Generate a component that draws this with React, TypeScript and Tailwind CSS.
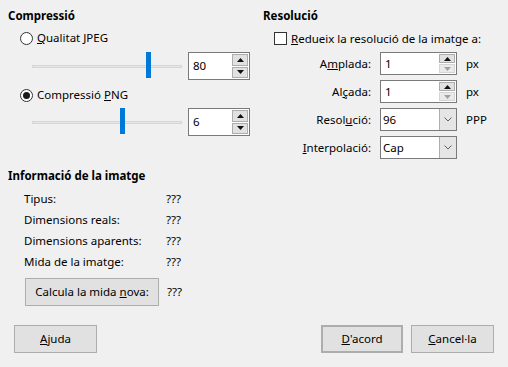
import React from "react";

const font = "font-['Noto_Sans',sans-serif] text-[11.5px] text-black";

function Radio({ checked }: { checked?: boolean }) {
  return (
    <span className="flex h-[13px] w-[13px] items-center justify-center rounded-full border border-[#333] bg-white">
      {checked && <span className="h-[7px] w-[7px] rounded-full bg-[#1a1a1a]" />}
    </span>
  );
}

function Arrow({ up, disabled }: { up?: boolean; disabled?: boolean }) {
  return (
    <svg width="7" height="4" viewBox="0 0 7 4">
      <polygon
        points={up ? "0,4 7,4 3.5,0" : "0,0 7,0 3.5,4"}
        fill={disabled ? "#a0a0a0" : "#111"}
      />
    </svg>
  );
}

function Spin({ value, className, downDisabled }: { value: string; className: string; downDisabled?: boolean }) {
  return (
    <div className={`flex items-center border border-[#7a7a7a] bg-white pl-[4px] pr-[1px] ${className}`}>
      <span className="flex-1">{value}</span>
      <div className="flex h-full flex-col justify-center gap-[1px] py-[1px]">
        <span className="flex flex-1 w-[16px] items-center justify-center border border-[#adadad] bg-[#e1e1e1]">
          <Arrow up />
        </span>
        <span
          className={`flex flex-1 w-[16px] items-center justify-center border ${
            downDisabled ? "border-[#d4d4d4] bg-[#eaeaea]" : "border-[#adadad] bg-[#e1e1e1]"
          }`}
        >
          <Arrow disabled={downDisabled} />
        </span>
      </div>
    </div>
  );
}

function Combo({ value }: { value: string }) {
  return (
    <div className="flex h-[23px] w-[77px] items-stretch border border-[#7a7a7a] bg-white">
      <span className="flex flex-1 items-center pl-[2px]">{value}</span>
      <span className="flex w-[17px] items-center justify-center border-l border-[#adadad] bg-[#e5e5e5]">
        <svg width="8" height="5" viewBox="0 0 8 5">
          <polyline points="0.5,0.5 4,4 7.5,0.5" fill="none" stroke="#606060" strokeWidth="1" />
        </svg>
      </span>
    </div>
  );
}

function Slider({ pos }: { pos: number }) {
  return (
    <div className="relative ml-[24px] h-[28px] w-[150px]">
      <div className="absolute left-0 right-0 top-[13px] h-[3px] border border-[#d6d6d6] bg-[#e7e7e7]" />
      <div className="absolute top-0 h-[26px] w-[5px] bg-[#0078d7]" style={{ left: pos }} />
    </div>
  );
}

function Btn({ children, className = "" }: { children: React.ReactNode; className?: string }) {
  return (
    <div className={`flex h-[28px] items-center justify-center border border-[#adadad] bg-[#e1e1e1] ${className}`}>
      {children}
    </div>
  );
}

export default function App() {
  return (
    <div className={`flex h-[367px] w-[508px] flex-col bg-[#f0f0f0] ${font}`}>
      <div className="flex">
        {/* left column */}
        <div className="flex w-[263px] flex-col pl-[8px]">
          <div className="mt-[6px] h-[20px] leading-[20px] font-bold">Compressió</div>
          <div className="flex h-[24px] items-center gap-[4px] pl-[12px]">
            <Radio />
            <span>
              <u>Q</u>ualitat JPEG
            </span>
          </div>
          <div className="mt-[2px] flex h-[28px] items-start">
            <Slider pos={114} />
            <Spin value="80" className="ml-[6px] h-[28px] w-[62px]" />
          </div>
          <div className="mt-[3px] flex h-[24px] items-center gap-[4px] pl-[12px]">
            <Radio checked />
            <span>
              Compressió <u>P</u>NG
            </span>
          </div>
          <div className="mt-[1px] flex h-[28px] items-start">
            <Slider pos={88} />
            <Spin value="6" className="ml-[6px] h-[28px] w-[62px]" />
          </div>

          <div className="mt-[30px] h-[20px] leading-[20px] font-bold">Informació de la imatge</div>
          <div className="mt-[2px] grid grid-cols-[142px_1fr] pl-[16px] leading-[21px]">
            <span>Tipus:</span>
            <span>???</span>
            <span>Dimensions reals:</span>
            <span>???</span>
            <span>Dimensions aparents:</span>
            <span>???</span>
            <span>Mida de la imatge:</span>
            <span>???</span>
          </div>
          <div className="mt-[6px] flex items-center pl-[17px]">
            <Btn className="w-[134px]">
              <span>
                Calcula la mida <u>n</u>ova:
              </span>
            </Btn>
            <span className="ml-[8px]">???</span>
          </div>
        </div>

        {/* right column */}
        <div className="flex flex-1 flex-col">
          <div className="mt-[6px] h-[20px] leading-[20px] font-bold">Resolució</div>
          <div className="flex h-[25px] items-center gap-[4px] pl-[11px]">
            <span className="h-[13px] w-[13px] border border-[#333] bg-white" />
            <span>
              <u>R</u>edueix la resolució de la imatge a:
            </span>
          </div>
          <div className="mt-[1px] grid grid-cols-[108px_77px_auto] items-center gap-x-[9px] gap-y-[5px]">
            <span className="text-right">
              A<u>m</u>plada:
            </span>
            <Spin value="1" className="h-[23px] w-[77px]" downDisabled />
            <span>px</span>
            <span className="text-right">
              Al<u>ç</u>ada:
            </span>
            <Spin value="1" className="h-[23px] w-[77px]" downDisabled />
            <span>px</span>
            <span className="text-right">
              Resol<u>u</u>ció:
            </span>
            <Combo value="96" />
            <span>PPP</span>
            <span className="text-right">
              <u>I</u>nterpolació:
            </span>
            <Combo value="Cap" />
            <span />
          </div>
        </div>
      </div>

      <div className="mt-auto mb-[14px] flex items-center px-[14px]">
        <Btn className="w-[83px]">
          <span>
            <u>A</u>juda
          </span>
        </Btn>
        <div className="ml-auto flex gap-[8px]">
          <Btn className="w-[82px] border-2 border-[#0078d7]">
            <span>
              <u>D</u>'acord
            </span>
          </Btn>
          <Btn className="w-[83px]">
            <span>
              <u>C</u>ancel·la
            </span>
          </Btn>
        </div>
      </div>
    </div>
  );
}
